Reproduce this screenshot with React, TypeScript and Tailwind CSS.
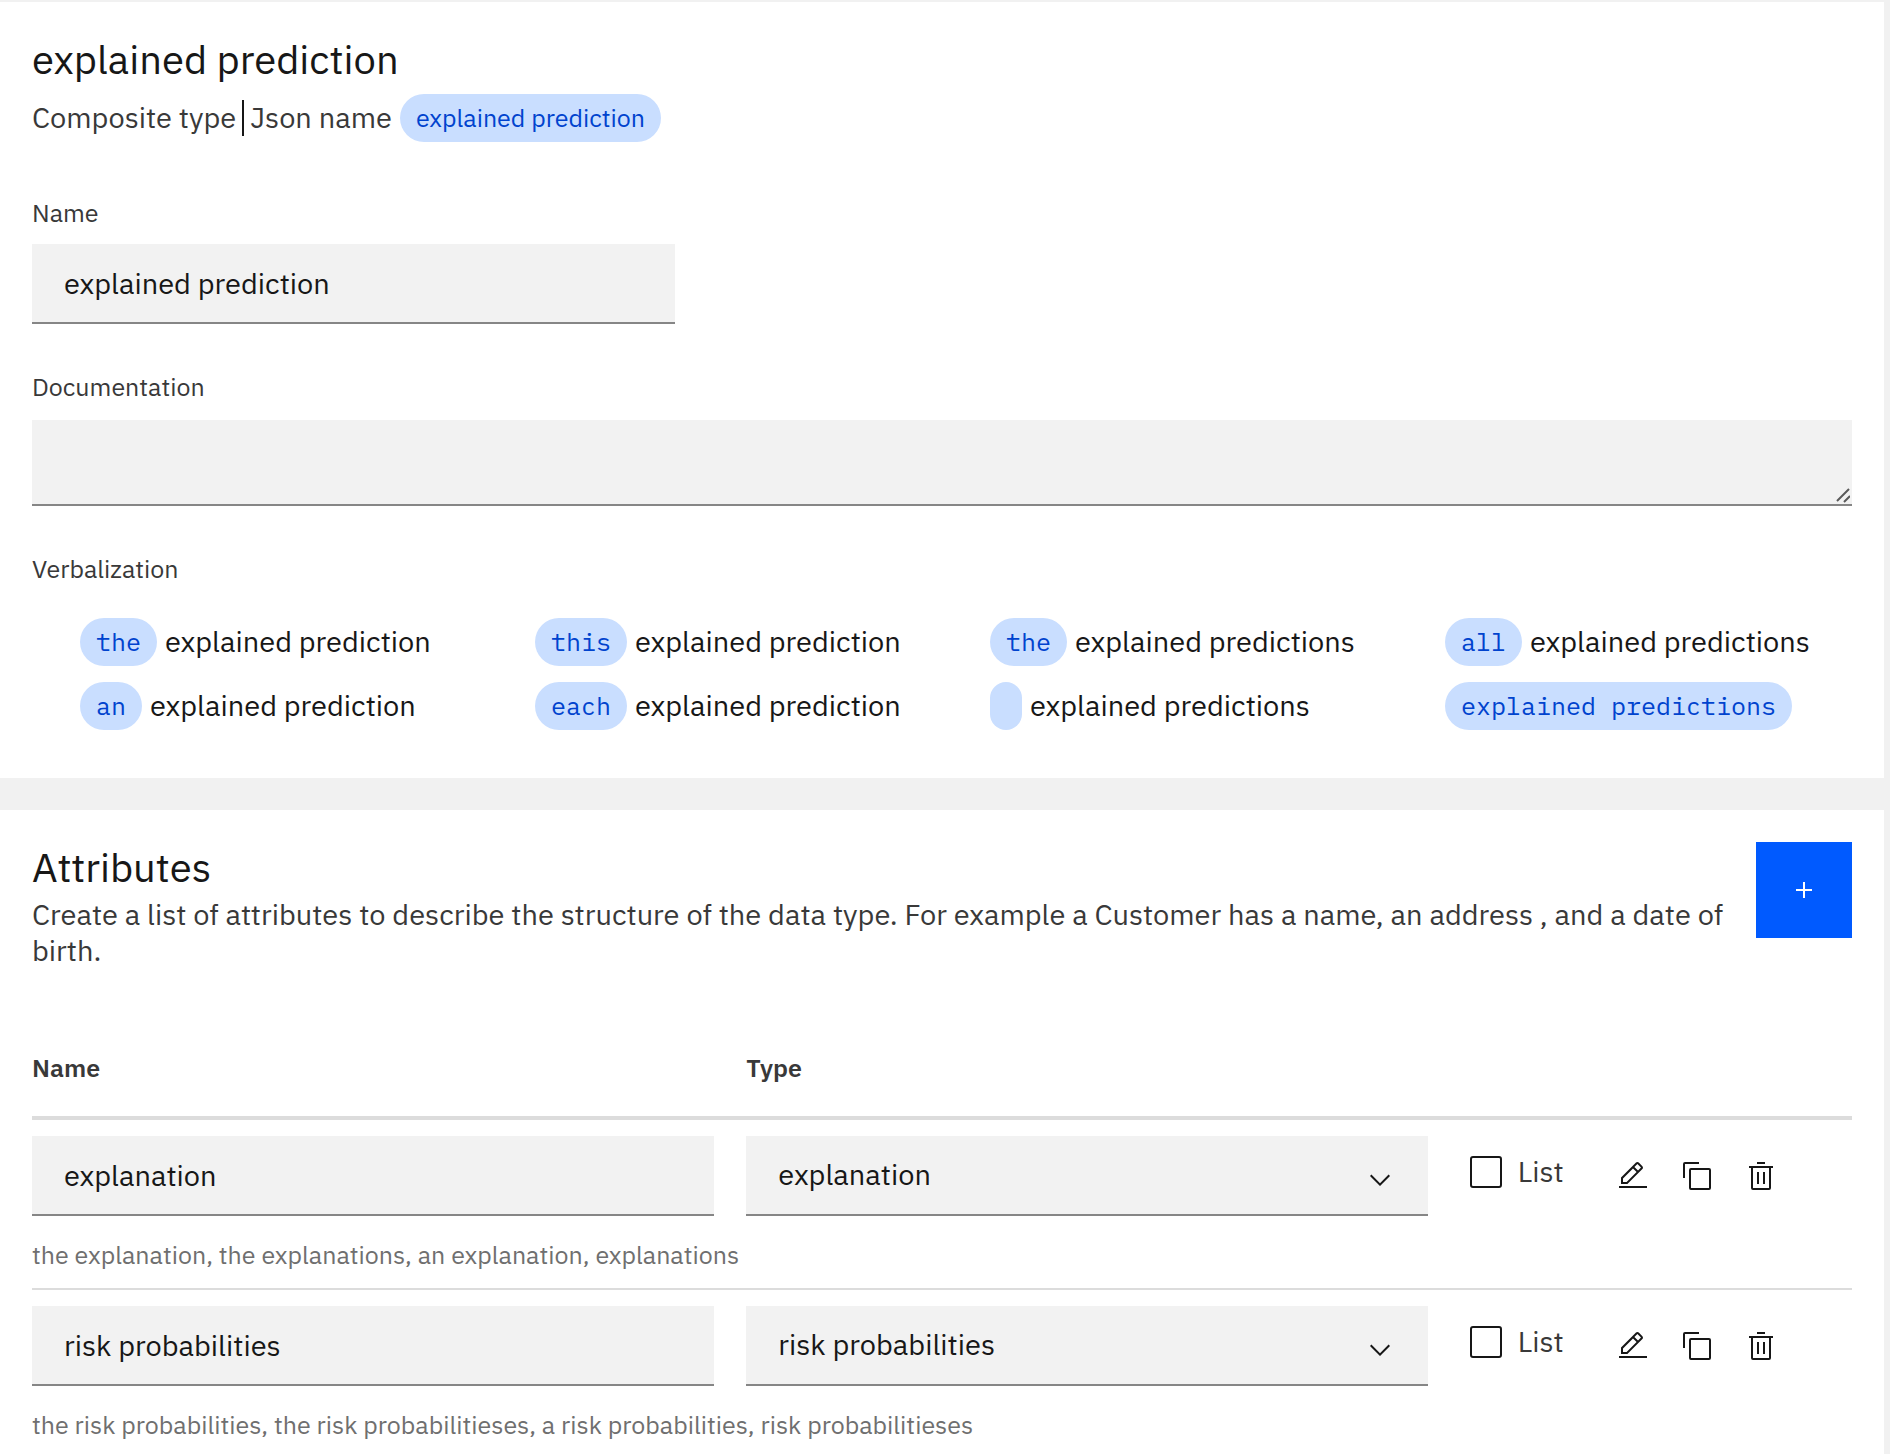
import React, { useState } from "react";

const phrases = [
  { tag: "the", text: "explained prediction" },
  { tag: "this", text: "explained prediction" },
  { tag: "the", text: "explained predictions" },
  { tag: "all", text: "explained predictions" },
  { tag: "an", text: "explained prediction" },
  { tag: "each", text: "explained prediction" },
  { tag: "", text: "explained predictions" },
  { tag: "explained predictions", text: "" },
];

const types = ["explanation", "risk probabilities"];

const attributes = [
  {
    name: "explanation",
    help: "the explanation, the explanations, an explanation, explanations",
  },
  {
    name: "risk probabilities",
    help: "the risk probabilities, the risk probabilitieses, a risk probabilities, risk probabilitieses",
  },
];

const actions = [
  {
    label: "Edit",
    d: "M2 26h28v2H2zM25.4 9c.8-.8.8-2 0-2.8l-3.6-3.6c-.8-.8-2-.8-2.8 0l-15 15V24h6.4l15-15zm-5-5L24 7.6l-3 3L17.4 7l3-3zM6 22v-3.6l10-10 3.6 3.6-10 10H6z",
  },
  {
    label: "Duplicate",
    d: "M28 10v18H10V10h18m0-2H10a2 2 0 0 0-2 2v18a2 2 0 0 0 2 2h18a2 2 0 0 0 2-2V10a2 2 0 0 0-2-2zM4 18H2V4a2 2 0 0 1 2-2h14v2H4z",
  },
  {
    label: "Delete",
    d: "M12 12h2v12h-2zM18 12h2v12h-2zM4 6v2h2v20a2 2 0 0 0 2 2h16a2 2 0 0 0 2-2V8h2V6zM8 28V8h16v20zM12 2h8v2h-8z",
  },
];

const field =
  "block h-20 w-full appearance-none rounded-none border-b-2 border-[#868686] bg-[#f2f2f2] px-8 text-[29px] text-[#171717] outline-none";

function Icon({ d }: { d: string }) {
  return (
    <svg viewBox="0 0 32 32" className="size-8 fill-current" aria-hidden="true">
      <path d={d} />
    </svg>
  );
}

function Tag({ mono, children }: { mono?: boolean; children?: React.ReactNode }) {
  return (
    <span
      className={
        "inline-flex h-12 items-center rounded-3xl bg-[#c9deff] px-4 text-[25px] whitespace-pre text-[#0043ce] " +
        (mono ? "font-['IBM_Plex_Mono','Liberation_Mono',monospace]" : "")
      }
    >
      {children}
    </span>
  );
}

function AttributeRow({ name, help, index }: { name: string; help: string; index: number }) {
  const [value, setValue] = useState(name);
  const [type, setType] = useState(name);
  const [list, setList] = useState(false);
  return (
    <tbody>
      <tr className="align-top">
        <td className="pt-4 pr-8">
          <input
            aria-label="Attribute name"
            className={field}
            value={value}
            onChange={(e) => setValue(e.target.value)}
          />
        </td>
        <td className="pt-4 pr-8">
          <div className="relative">
            <select
              aria-label="Attribute type"
              className={field}
              value={type}
              onChange={(e) => setType(e.target.value)}
            >
              {types.map((t) => (
                <option key={t}>{t}</option>
              ))}
            </select>
            <svg
              viewBox="0 0 16 16"
              className="pointer-events-none absolute top-7 right-8 size-8 fill-[#171717]"
              aria-hidden="true"
            >
              <path d="M8 11L3 6l.7-.7L8 9.6l4.3-4.3.7.7z" />
            </svg>
          </div>
        </td>
        <td className="pt-4 pl-2.5">
          <div className="flex h-18 items-center gap-4">
            <input
              id={"list-" + index}
              type="checkbox"
              className="size-8 shrink-0 appearance-none rounded-[3px] border-2 border-[#171717] checked:bg-[#171717]"
              checked={list}
              onChange={(e) => setList(e.target.checked)}
            />
            <label htmlFor={"list-" + index} className="text-[29px] text-[#393939]">
              List
            </label>
          </div>
        </td>
        <td className="pt-4">
          <div className="flex">
            {actions.map((a) => (
              <button
                key={a.label}
                type="button"
                aria-label={a.label}
                className="flex h-20 w-16 items-center justify-center text-[#171717]"
              >
                <Icon d={a.d} />
              </button>
            ))}
          </div>
        </td>
      </tr>
      <tr>
        <td
          colSpan={4}
          className="h-[74px] border-b-2 border-[#dcdcdc] pt-1.5 text-[25px] leading-8 text-[#6f6f6f]"
        >
          {help}
        </td>
      </tr>
    </tbody>
  );
}

export default function App() {
  const [name, setName] = useState("explained prediction");
  const [doc, setDoc] = useState("");
  return (
    <main className="flex h-screen flex-col gap-8 overflow-hidden bg-[#f1f1f1] pt-0.5 pr-1.5 font-['IBM_Plex_Sans',Roboto,sans-serif] text-[#171717]">
      <section className="bg-white px-8 pt-8 pb-12">
        <h1 className="text-[40px] leading-[50px]">explained prediction</h1>
        <div className="mt-2.5 flex items-center text-[29px] text-[#393939]">
          <span>Composite type</span>
          <span className="mx-1.5 h-9 w-0.5 bg-[#171717]" />
          <span className="mr-2">Json name</span>
          <Tag>explained prediction</Tag>
        </div>

        <label htmlFor="type-name" className="mt-14 block text-[25px] leading-[30px] text-[#393939]">
          Name
        </label>
        <div className="mt-4 w-[643px] max-w-full">
          <input id="type-name" className={field} value={name} onChange={(e) => setName(e.target.value)} />
        </div>

        <label htmlFor="type-doc" className="mt-12 block text-[25px] leading-[30px] text-[#393939]">
          Documentation
        </label>
        <div className="relative mt-[18px]">
          <textarea
            id="type-doc"
            className="block h-[86px] w-full resize-none border-b-2 border-[#868686] bg-[#f2f2f2] px-8 py-5 text-[29px] outline-none"
            value={doc}
            onChange={(e) => setDoc(e.target.value)}
          />
          <svg
            viewBox="0 0 16 16"
            className="pointer-events-none absolute right-0.5 bottom-0.5 size-4"
            fill="none"
            stroke="#5a5a5a"
            strokeWidth="2"
            aria-hidden="true"
          >
            <path d="M3 13L15 1M10 14L16 8" />
          </svg>
        </div>

        <h2 className="mt-12 text-[25px] leading-[30px] text-[#393939]">Verbalization</h2>
        <ul className="mt-[34px] grid grid-cols-4 gap-y-4 text-[29px]">
          {phrases.map((p, i) => (
            <li key={i} className="flex items-center gap-2 pl-12 whitespace-nowrap">
              <Tag mono>{p.tag}</Tag>
              {p.text && <span>{p.text}</span>}
            </li>
          ))}
        </ul>
      </section>

      <section className="flex-1 bg-white px-8 pt-8">
        <header className="flex items-start justify-between gap-8">
          <div className="flex-1">
            <h2 className="text-[40px] leading-[50px]">Attributes</h2>
            <p className="mt-1 text-[29px] leading-9 text-[#393939]">
              Create a list of attributes to describe the structure of the data type. For example a Customer has a
              name, an address , and a date of birth.
            </p>
          </div>
          <button
            type="button"
            aria-label="Add attribute"
            className="flex size-24 shrink-0 items-center justify-center bg-[#005aff] text-white"
          >
            <Icon d="M17 15V8h-2v7H8v2h7v7h2v-7h7v-2z" />
          </button>
        </header>

        <table className="mt-[52px] w-full table-fixed border-separate border-spacing-0">
          <colgroup>
            <col className="w-[39.25%]" />
            <col className="w-[39.2%]" />
            <col />
            <col className="w-[251px]" />
          </colgroup>
          <thead>
            <tr className="text-left text-[25px] text-[#393939]">
              <th scope="col" className="h-[100px] border-b-4 border-[#dcdcdc] font-semibold">
                Name
              </th>
              <th scope="col" className="border-b-4 border-[#dcdcdc] font-semibold">
                Type
              </th>
              <td className="border-b-4 border-[#dcdcdc]" />
              <td className="border-b-4 border-[#dcdcdc]" />
            </tr>
          </thead>
          {attributes.map((a, i) => (
            <AttributeRow key={a.name} index={i} name={a.name} help={a.help} />
          ))}
        </table>
      </section>
    </main>
  );
}
